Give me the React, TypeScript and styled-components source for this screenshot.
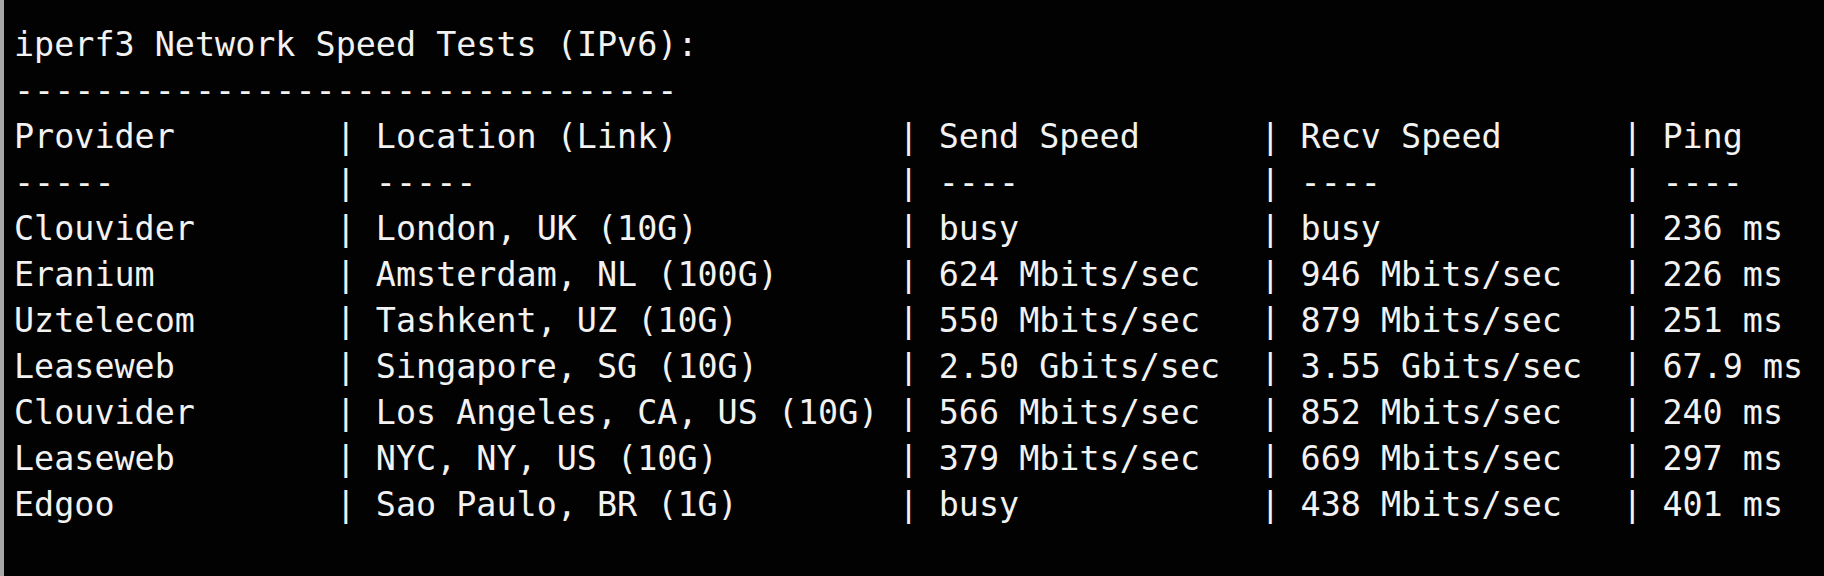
import React from "react";
import styled, { createGlobalStyle } from "styled-components";

const GlobalStyle = createGlobalStyle`
  html, body {
    margin: 0;
    padding: 0;
    background: #020202;
  }
  body {
    width: 1824px;
    height: 576px;
    overflow: hidden;
  }
`;

const Screen = styled.div`
  box-sizing: border-box;
  width: 1824px;
  height: 576px;
  background: #020202;
  border-left: 4px solid #a8a8a8;
  padding: 22px 0 0 10px;
  color: #f2f2f2;
  font-family: "DejaVu Sans Mono", "Liberation Mono", monospace;
  font-size: 33.4px;
  line-height: 46px;
`;

const Line = styled.div`
  white-space: pre;
  height: 46px;
`;

const Table = styled.div`
  display: grid;
  grid-template-columns: 16ch 2ch 26ch 2ch 16ch 2ch 16ch 2ch auto;
  grid-auto-rows: 46px;
`;

const Cell = styled.div`
  white-space: pre;
`;

const Sep = styled.div`
  white-space: pre;
`;

type Row = [string, string, string, string, string];

const header: Row = ["Provider", "Location (Link)", "Send Speed", "Recv Speed", "Ping"];
const rule: Row = ["-----", "-----", "----", "----", "----"];

const rows: Row[] = [
  ["Clouvider", "London, UK (10G)", "busy", "busy", "236 ms"],
  ["Eranium", "Amsterdam, NL (100G)", "624 Mbits/sec", "946 Mbits/sec", "226 ms"],
  ["Uztelecom", "Tashkent, UZ (10G)", "550 Mbits/sec", "879 Mbits/sec", "251 ms"],
  ["Leaseweb", "Singapore, SG (10G)", "2.50 Gbits/sec", "3.55 Gbits/sec", "67.9 ms"],
  ["Clouvider", "Los Angeles, CA, US (10G)", "566 Mbits/sec", "852 Mbits/sec", "240 ms"],
  ["Leaseweb", "NYC, NY, US (10G)", "379 Mbits/sec", "669 Mbits/sec", "297 ms"],
  ["Edgoo", "Sao Paulo, BR (1G)", "busy", "438 Mbits/sec", "401 ms"],
];

function TableRow({ row }: { row: Row }) {
  return (
    <>
      {row.map((v, i) => (
        <React.Fragment key={i}>
          {i > 0 && <Sep>| </Sep>}
          <Cell>{v}</Cell>
        </React.Fragment>
      ))}
    </>
  );
}

export default function App() {
  return (
    <>
      <GlobalStyle />
      <Screen>
        <Line>iperf3 Network Speed Tests (IPv6):</Line>
        <Line>{"-".repeat(33)}</Line>
        <Table>
          <TableRow row={header} />
          <TableRow row={rule} />
          {rows.map((r, i) => (
            <TableRow key={i} row={r} />
          ))}
        </Table>
      </Screen>
    </>
  );
}
